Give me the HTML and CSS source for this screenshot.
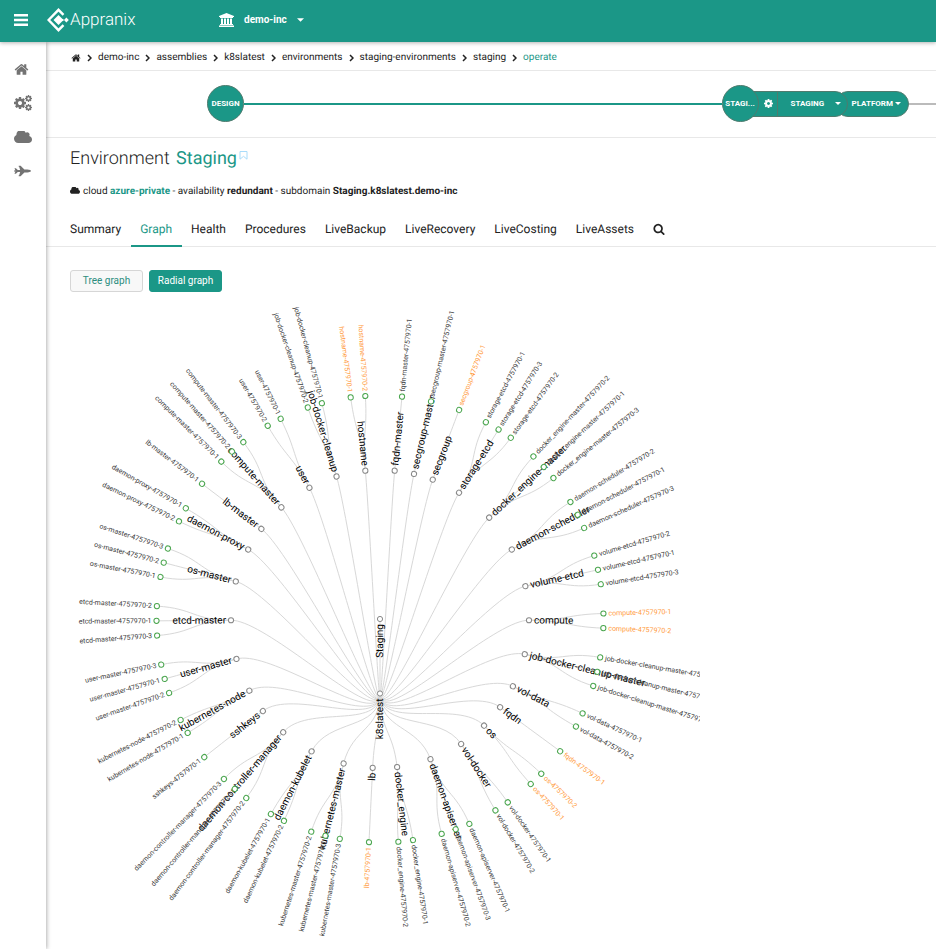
FILE: index.html
```html
<!DOCTYPE html>
<html lang="en">
<head>
<meta charset="utf-8">
<title>Appranix - Staging</title>
<link rel="stylesheet" href="styles.css">
</head>
<body>
<svg class="sprite" aria-hidden="true">
  <symbol id="home" viewBox="0 0 1792 1792"><path d="M1472 992v480q0 26-19 45t-45 19h-384v-384h-256v384h-384q-26 0-45-19t-19-45v-480q0-1 .5-3t.5-3l575-474 575 474q1 2 1 6zm223-69l-62 74q-8 9-21 11h-3q-13 0-21-7l-692-577-692 577q-12 8-24 7-13-2-21-11l-62-74q-8-10-7-23.5t11-21.5l719-599q32-26 76-26t76 26l244 204v-195q0-14 9-23t23-9h192q14 0 23 9t9 23v408l219 182q10 8 11 21.5t-7 23.5z"/></symbol>
  <symbol id="cloud" viewBox="64 256 1920 1280"><path d="M1984 1152q0 159-112.5 271.5t-271.5 112.5h-1088q-185 0-316.5-131.5t-131.5-316.5q0-132 71-241.5t187-163.5q-2-28-2-43 0-212 150-362t362-150q158 0 286.5 88t187.5 230q70-62 166-62 106 0 181 75t75 181q0 75-41 138 129 30 213 134.5t84 239.5z"/></symbol>
  <symbol id="search" viewBox="0 0 1792 1792"><path d="M1216 832q0-185-131.5-316.5t-316.5-131.5-316.5 131.5-131.5 316.5 131.5 316.5 316.5 131.5 316.5-131.5 131.5-316.5zm512 832q0 52-38 90t-90 38q-54 0-90-38l-343-342q-179 124-399 124-143 0-273.5-55.5t-225-150-150-225-55.5-273.5 55.5-273.5 150-225 225-150 273.5-55.5 273.5 55.5 225 150 150 225 55.5 273.5q0 220-124 399l343 343q37 37 37 90z"/></symbol>
  <symbol id="cog" viewBox="128 128 1536 1536"><path d="M1152 896q0-106-75-181t-181-75-181 75-75 181 75 181 181 75 181-75 75-181zm512-109v222q0 12-8 23t-20 13l-185 28q-19 54-39 91 35 50 107 138 10 12 10 25t-9 23q-27 37-99 108t-94 71q-12 0-26-9l-138-108q-44 23-91 38-16 136-29 186-7 28-36 28h-222q-14 0-24.5-8.5t-11.5-21.5l-28-184q-49-16-90-37l-141 107q-10 9-25 9-14 0-25-11-126-114-165-168-7-10-7-23 0-12 8-23 15-21 51-66.5t54-70.5q-27-50-41-99l-183-27q-13-2-21-12.5t-8-23.5v-222q0-12 8-23t19-13l186-28q14-46 39-92-40-57-107-138-10-12-10-24 0-10 9-23 26-36 98.5-107.5t94.5-71.5q13 0 26 10l138 107q44-23 91-38 16-136 29-186 7-28 36-28h222q14 0 24.5 8.5t11.5 21.5l28 184q49 16 90 37l142-107q9-9 24-9 13 0 25 10 129 119 165 170 7 8 7 22 0 12-8 23-15 21-51 66.5t-54 70.5q26 50 41 98l183 28q13 2 21 12.5t8 23.5z"/></symbol>
  <symbol id="cogs" viewBox="0 0 18 16"><use href="#cog" x="0" y="2" width="12" height="12"/><use href="#cog" x="11" y="0" width="7" height="7"/><use href="#cog" x="11" y="9" width="7" height="7"/></symbol>
  <symbol id="jet" viewBox="0 0 36 24"><path d="M0 11h3L1 6h3l4 4h5L11 3h-1V1h4l8 8h6q8 1 8 3t-8 3h-6l-8 8h-4v-2h1l2-7H8l-4 4H1l2-5H0z"/></symbol>
  <symbol id="bank" viewBox="0 0 30 28"><path d="M15 0l15 6v2h-2v2H2V8H0V6zM4 11h4v11h2V11h4v11h2V11h4v11h2V11h4v11h2v2H2v-2h2zM0 25h30v3H0z"/></symbol>
  <symbol id="bars" viewBox="0 0 14 12"><path d="M0 0h14v2.500H0zM0 4.800h14v2.500H0zM0 9.500h14V12H0z"/></symbol>
  <symbol id="caret" viewBox="0 0 8 4"><path d="M0 0h8L4 4z"/></symbol>
  <symbol id="chevron" viewBox="0 0 5 8"><path d="M1 1l3 3-3 3" fill="none" stroke="currentColor" stroke-width="1.500"/></symbol>
  <symbol id="bookmark" viewBox="0 0 9 9"><path d="M1 .5h7v7.700L4.500 5.300 1 8.200z" fill="none" stroke="currentColor"/></symbol>
  <symbol id="logo" viewBox="0 0 22 24"><path d="M16.500 6.800L11.500 1.800 1.600 12l9.900 10.200 5-5" fill="none" stroke="currentColor" stroke-width="2.400"/><path d="M11.500 7l4 4h1v2h-1l-4 4-5-5zM19.400 9.600l2.400 2.400-2.400 2.400-2.400-2.400z"/></symbol>
</svg>

<header class="topbar">
  <button class="menu" aria-label="Menu"><svg><use href="#bars"/></svg></button>
  <a class="brand" href="#"><svg><use href="#logo"/></svg>Appranix</a>
  <button class="org"><svg class="org-icon"><use href="#bank"/></svg>demo-inc<svg class="caret"><use href="#caret"/></svg></button>
</header>

<div class="shell">
  <nav class="sidebar" aria-label="Main">
    <a href="#" aria-label="Home"><svg class="side-home"><use href="#home"/></svg></a>
    <a href="#" aria-label="Settings"><svg class="side-cogs"><use href="#cogs"/></svg></a>
    <a href="#" aria-label="Clouds"><svg class="side-cloud"><use href="#cloud"/></svg></a>
    <a href="#" aria-label="Flights"><svg class="side-jet"><use href="#jet"/></svg></a>
  </nav>

  <main class="content">
    <nav class="crumbs" aria-label="Breadcrumb">
      <a href="#" aria-label="Home"><svg class="crumb-home"><use href="#home"/></svg></a><svg class="sep"><use href="#chevron"/></svg>
      <a href="#">demo-inc</a><svg class="sep"><use href="#chevron"/></svg>
      <a href="#">assemblies</a><svg class="sep"><use href="#chevron"/></svg>
      <a href="#">k8slatest</a><svg class="sep"><use href="#chevron"/></svg>
      <a href="#">environments</a><svg class="sep"><use href="#chevron"/></svg>
      <a href="#">staging-environments</a><svg class="sep"><use href="#chevron"/></svg>
      <a href="#">staging</a><svg class="sep"><use href="#chevron"/></svg>
      <a class="current" href="#">operate</a>
    </nav>

    <section class="pipeline">
      <button class="stage-circle">DESIGN</button>
      <span class="track"></span>
      <button class="stage-circle">STAGI...</button>
      <div class="stage-bar">
        <button class="gear" aria-label="Stage settings"><svg><use href="#cog"/></svg></button>
        <button class="stage-name">STAGING<svg class="caret"><use href="#caret"/></svg></button>
      </div>
      <button class="platform">PLATFORM<svg class="caret"><use href="#caret"/></svg></button>
      <span class="track-end"></span>
    </section>

    <div class="heading">
      <h1>Environment <a href="#">Staging</a></h1>
      <button class="bookmark" aria-label="Bookmark"><svg><use href="#bookmark"/></svg></button>
    </div>
    <p class="meta"><svg><use href="#cloud"/></svg>cloud <a href="#">azure-private</a> - availability <b>redundant</b> - subdomain <b>Staging.k8slatest.demo-inc</b></p>

    <nav class="tabs" aria-label="Sections">
      <a href="#">Summary</a>
      <a class="active" href="#">Graph</a>
      <a href="#">Health</a>
      <a href="#">Procedures</a>
      <a href="#">LiveBackup</a>
      <a href="#">LiveRecovery</a>
      <a href="#">LiveCosting</a>
      <a href="#">LiveAssets</a>
      <a href="#" aria-label="Search"><svg><use href="#search"/></svg></a>
    </nav>

    <div class="modes">
      <button class="mode">Tree graph</button>
      <button class="mode selected">Radial graph</button>
    </div>

    <svg class="graph" viewBox="-310 -314 630 640" role="img" aria-label="Radial graph"></svg>
  </main>
</div>
<script src="graph.js"></script>
</body>
</html>
```
FILE: styles.css
```css
* { box-sizing: border-box; }
body {
  margin: 0;
  min-height: 100vh;
  display: flex;
  flex-direction: column;
  font: 10px/16px Roboto, "Liberation Sans", sans-serif;
  text-rendering: geometricPrecision;
  color: #222;
  background: #fff;
}
a { color: inherit; text-decoration: none; }
button { font: inherit; color: inherit; border: 0; padding: 0; background: none; cursor: pointer; }
svg { fill: currentColor; flex: none; }
.sprite { position: absolute; width: 0; height: 0; }
.caret { width: 7px; height: 4px; }

.topbar {
  position: relative;
  z-index: 2;
  display: flex;
  align-items: center;
  height: 42px;
  padding: 0 14px 2px;
  color: #fff;
  background: #1b9787;
  box-shadow: 0 1px 4px rgba(0, 0, 0, .3);
}
.menu { display: flex; }
.menu svg { width: 14px; height: 12px; }
.brand { display: flex; align-items: center; gap: 1px; width: 172px; margin-left: 19px; font-size: 17px; font-weight: 300; }
.brand svg { width: 22px; height: 24px; }
.org { display: flex; align-items: center; gap: 10px; font-weight: 700; }
.org-icon { width: 15px; height: 14px; }

.shell { flex: 1; display: flex; }
.sidebar {
  position: relative;
  z-index: 1;
  flex: none;
  width: 46px;
  padding: 10px 0 0 14px;
  color: #737373;
  background: #fff;
  box-shadow: 1px 0 4px rgba(0, 0, 0, .3);
}
.sidebar a { display: flex; align-items: center; height: 34px; }
.side-home { width: 15px; height: 15px; }
.side-cogs { width: 18px; height: 16px; }
.side-cloud { width: 18px; height: 12px; }
.side-jet { width: 17px; height: 12px; }

.content { flex: 1; min-width: 0; overflow: hidden; }
.crumbs {
  display: flex;
  align-items: center;
  gap: 6px;
  height: 29px;
  padding: 3px 0 0 25px;
  border-bottom: 1px solid #e8e8e8;
}
.crumbs a { display: flex; }
.crumb-home { width: 10px; height: 10px; }
.sep { width: 5px; height: 8px; }
.crumbs .current { color: #1b9787; }

.pipeline {
  display: flex;
  align-items: center;
  height: 67px;
  padding: 0 0 1px 161px;
  border-bottom: 1px solid #e8e8e8;
  font-size: 8px;
  font-weight: 700;
  color: #fff;
}
.stage-circle, .stage-bar, .platform { border: 1px solid #4f7b6e; background: #1b9787; }
.stage-circle { position: relative; z-index: 2; flex: none; width: 37px; height: 37px; border-radius: 50%; }
.track { flex: 1; height: 2px; background: #1b9787; }
.stage-bar {
  position: relative;
  z-index: 1;
  display: flex;
  width: 103px;
  height: 26px;
  margin-left: -14px;
  border-radius: 0 13px 13px 0;
}
.gear { display: flex; align-items: center; justify-content: flex-end; width: 32px; padding-right: 4px; border-right: 1px solid #4f7b6e; }
.gear svg { width: 9px; height: 9px; }
.stage-name { display: flex; flex: 1; align-items: center; justify-content: space-between; padding: 0 6px 0 13px; }
.platform { display: flex; align-items: center; gap: 2px; height: 26px; margin-left: -13px; padding: 0 7px 0 16px; border-radius: 13px; }
.stage-bar .caret, .platform .caret { width: 6px; height: 3px; }
.track-end { width: 27px; height: 2px; background: #bbb; }

.heading { display: flex; align-items: flex-start; gap: 2px; padding: 9px 24px 0; }
h1 { margin: 0; font-size: 18px; line-height: 24px; font-weight: 300; }
h1 a { margin-left: 2px; font-weight: 400; color: #1b9787; }
.bookmark { display: flex; padding-top: 4px; color: #a9dcfa; }
.bookmark svg { width: 9px; height: 9px; }
.meta { margin: 0; padding: 13px 24px 0; }
.meta svg { width: 10px; height: 7px; margin-right: 3px; }
.meta a { font-weight: 700; color: #1b9787; }

.tabs { display: flex; height: 47px; padding-left: 15px; border-bottom: 1px solid #e8e8e8; font-size: 12px; }
.tabs a { height: 47px; padding: 21px 10px 0 9px; border-bottom: 2px solid transparent; }
.tabs .active { color: #1b9787; border-color: #1b9787; }
.tabs svg { display: block; width: 12px; height: 12px; margin-top: 2px; }

.modes { display: flex; gap: 6px; padding: 23px 24px 0; }
.mode { min-width: 73px; height: 22px; border: 1px solid #d6d6d6; border-radius: 3px; color: #2c8d7e; background: #f8f8f8; }
.mode.selected { color: #fff; border-color: #1b9787; background: #1b9787; }

.graph { display: block; width: 630px; max-width: 100%; margin: 13px 0 0 24px; overflow: hidden; }
.link { fill: none; stroke: #d8d8d8; stroke-width: 1; }
.node circle { fill: #fff; stroke: #888; stroke-width: 1; }
.node text { font-size: 10px; fill: #000; }
.leaf circle { stroke: #4ba64f; }
.leaf text { font-size: 7px; fill: #3a3a3a; }
.leaf.pending text { fill: #ff9a3c; }
```
FILE: graph.js
```js
// Components in clockwise order: name, instance numbers, pending flag.
const components = [
  ["fqdn-master", [1]], ["secgroup-master", [1]], ["secgroup", [1], true],
  ["storage-etcd", [1, 3, 2]], ["docker_engine-master", [2, 1, 3]],
  ["daemon-scheduler", [2, 1, 3]], ["volume-etcd", [2, 1, 3]],
  ["compute", [1, 2], true], ["job-docker-cleanup-master", [2, 1, 3]],
  ["vol-data", [1, 2]], ["fqdn", [1], true], ["os", [2, 1], true],
  ["vol-docker", [1, 2]], ["daemon-apiserver", [1, 3, 2]],
  ["docker_engine", [1, 2]], ["lb", [1], true],
  ["kubernetes-master", [3, 1, 2]], ["daemon-kubelet", [2, 1]],
  ["daemon-controller-manager", [2, 1, 3]], ["sshkeys", [1]],
  ["kubernetes-node", [1, 2]], ["user-master", [2, 1, 3]],
  ["etcd-master", [3, 1, 2]], ["os-master", [1, 2, 3]],
  ["daemon-proxy", [2, 1]], ["lb-master", [1]],
  ["compute-master", [1, 2, 3]], ["user", [2, 1]],
  ["job-docker-cleanup", [2, 1]], ["hostname", [1, 2], true]
];
const RING = 74.5;
const svg = document.querySelector(".graph");

function add(parent, tag, attrs) {
  const el = document.createElementNS("http://www.w3.org/2000/svg", tag);
  for (const key in attrs) el.setAttribute(key, attrs[key]);
  parent.appendChild(el);
  return el;
}

function point(angle, radius) {
  const t = (angle - 90) * Math.PI / 180;
  return (radius * Math.cos(t)).toFixed(2) + "," + (radius * Math.sin(t)).toFixed(2);
}

// One step between siblings, two between instances of different components.
let steps = 1.5;
const tree = components.map(([name, ids, pending]) => {
  const leaves = ids.map(id => ({ name: name + "-4757970-" + id, at: steps++, depth: 3, leaf: true, pending }));
  steps++;
  return { name, depth: 2, at: (leaves[0].at + leaves[leaves.length - 1].at) / 2, children: leaves };
});
const unit = 360 / (steps - 1);
const app = { name: "k8slatest", depth: 1, at: 180 / unit, children: tree };
const root = { name: "Staging", depth: 0, at: 180 / unit, children: [app] };

function drawLinks(node) {
  for (const child of node.children || []) {
    const a = node.at * unit, b = child.at * unit;
    const r0 = node.depth * RING, r1 = child.depth * RING, mid = (r0 + r1) / 2;
    add(svg, "path", { class: "link", d: "M" + point(a, r0) + "C" + point(a, mid) + " " + point(b, mid) + " " + point(b, r1) });
    drawLinks(child);
  }
}

function drawNodes(node) {
  const angle = node.at * unit;
  const flip = angle > 179.99;
  const g = add(svg, "g", {
    class: "node" + (node.leaf ? " leaf" : "") + (node.pending ? " pending" : ""),
    transform: "rotate(" + (angle - 90) + ") translate(" + node.depth * RING + ")"
  });
  add(g, "circle", { r: 2.6 });
  add(g, "text", {
    dy: ".31em",
    "text-anchor": flip ? "end" : "start",
    transform: flip ? "rotate(180) translate(-5)" : "translate(5)"
  }).textContent = node.name;
  (node.children || []).forEach(drawNodes);
}

drawLinks(root);
drawNodes(root);
```
